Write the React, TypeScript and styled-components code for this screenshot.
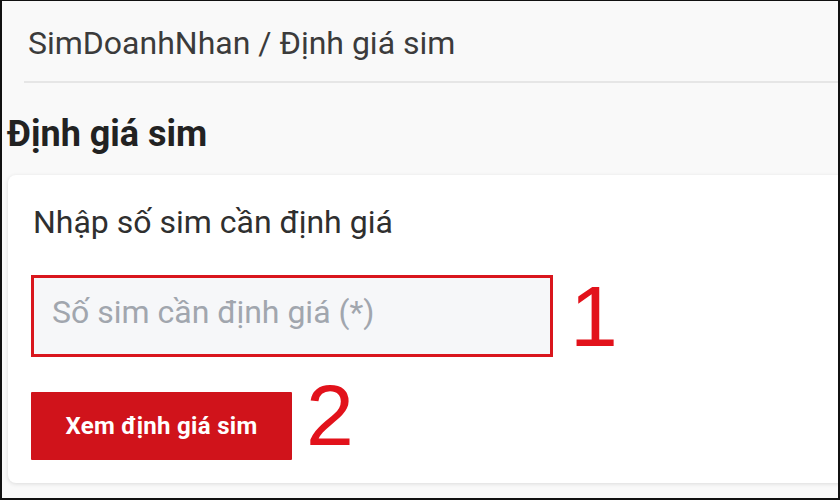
import styled, { createGlobalStyle } from "styled-components";

const GlobalStyle = createGlobalStyle`
  html, body {
    margin: 0;
    padding: 0;
    background: #ffffff;
  }
  * {
    box-sizing: border-box;
  }
`;

const StyledFrame = styled.div`
  width: 840px;
  height: 500px;
  overflow: hidden;
  border: 2px solid #111;
  border-top-width: 1px;
  background: #f9f9f9;
  font-family: Roboto, "Liberation Sans", Arial, sans-serif;
  display: flex;
  flex-direction: column;
`;

const StyledBreadcrumb = styled.nav`
  margin-left: 22px;
  height: 82px;
  flex-shrink: 0;
  padding: 4px 0 0 4px;
  display: flex;
  align-items: center;
  border-bottom: 2px solid #e6e6e6;
  font-size: 32px;
  color: #3b3b3b;
`;

const StyledTitle = styled.h1`
  margin: 0;
  flex-shrink: 0;
  padding: 29px 0 0 5px;
  height: 92px;
  font-size: 36px;
  font-weight: 700;
  color: #222;
  line-height: 44px;
`;

const StyledCard = styled.section`
  margin-left: 6px;
  width: 860px;
  height: 308px;
  flex-shrink: 0;
  background: #fff;
  border-radius: 8px;
  box-shadow: 0 1px 4px rgba(0, 0, 0, 0.12);
  padding: 27px 0 0 23px;
  display: flex;
  flex-direction: column;
`;

const StyledLabel = styled.p`
  margin: 0 0 0 2px;
  font-size: 32px;
  line-height: 40px;
  color: #2f2f2f;
`;

const StyledRow = styled.div<{ $top: number }>`
  display: flex;
  align-items: center;
  margin-top: ${({ $top }) => $top}px;
`;

const StyledInputFrame = styled.div`
  width: 522px;
  height: 82px;
  border: 3px solid #d9161d;
  background: #f6f7f9;
  display: flex;
  align-items: center;
`;

const StyledInput = styled.input`
  width: 100%;
  height: 100%;
  border: none;
  outline: none;
  background: transparent;
  padding: 0 0 8px 18px;
  font-family: Roboto, "Liberation Sans", Arial, sans-serif;
  font-size: 32px;
  color: #333;

  &::placeholder {
    color: #a1a6ae;
  }
`;

const StyledButton = styled.button`
  width: 261px;
  height: 68px;
  margin-top: 2px;
  border: none;
  border-radius: 1px;
  background: #d0131b;
  color: #fff;
  font-family: Roboto, "Liberation Sans", Arial, sans-serif;
  font-size: 24px;
  font-weight: 700;
  letter-spacing: 0.3px;
  cursor: pointer;
`;

const StyledMark = styled.span<{ $gap: number; $lift: number }>`
  margin-left: ${({ $gap }) => $gap}px;
  margin-bottom: ${({ $lift }) => $lift * 2}px;
  font-family: "Liberation Sans", Arial, sans-serif;
  font-size: 86px;
  line-height: 40px;
  color: #e2121b;
`;

export default function App() {
  return (
    <>
      <GlobalStyle />
      <StyledFrame>
        <StyledBreadcrumb>SimDoanhNhan / Định giá sim</StyledBreadcrumb>
        <StyledTitle>Định giá sim</StyledTitle>
        <StyledCard>
          <StyledLabel>Nhập số sim cần định giá</StyledLabel>
          <StyledRow $top={33}>
            <StyledInputFrame>
              <StyledInput placeholder="Số sim cần định giá (*)" />
            </StyledInputFrame>
            <StyledMark $gap={17} $lift={0}>
              1
            </StyledMark>
          </StyledRow>
          <StyledRow $top={33}>
            <StyledButton>Xem định giá sim</StyledButton>
            <StyledMark $gap={14} $lift={10}>
              2
            </StyledMark>
          </StyledRow>
        </StyledCard>
      </StyledFrame>
    </>
  );
}
